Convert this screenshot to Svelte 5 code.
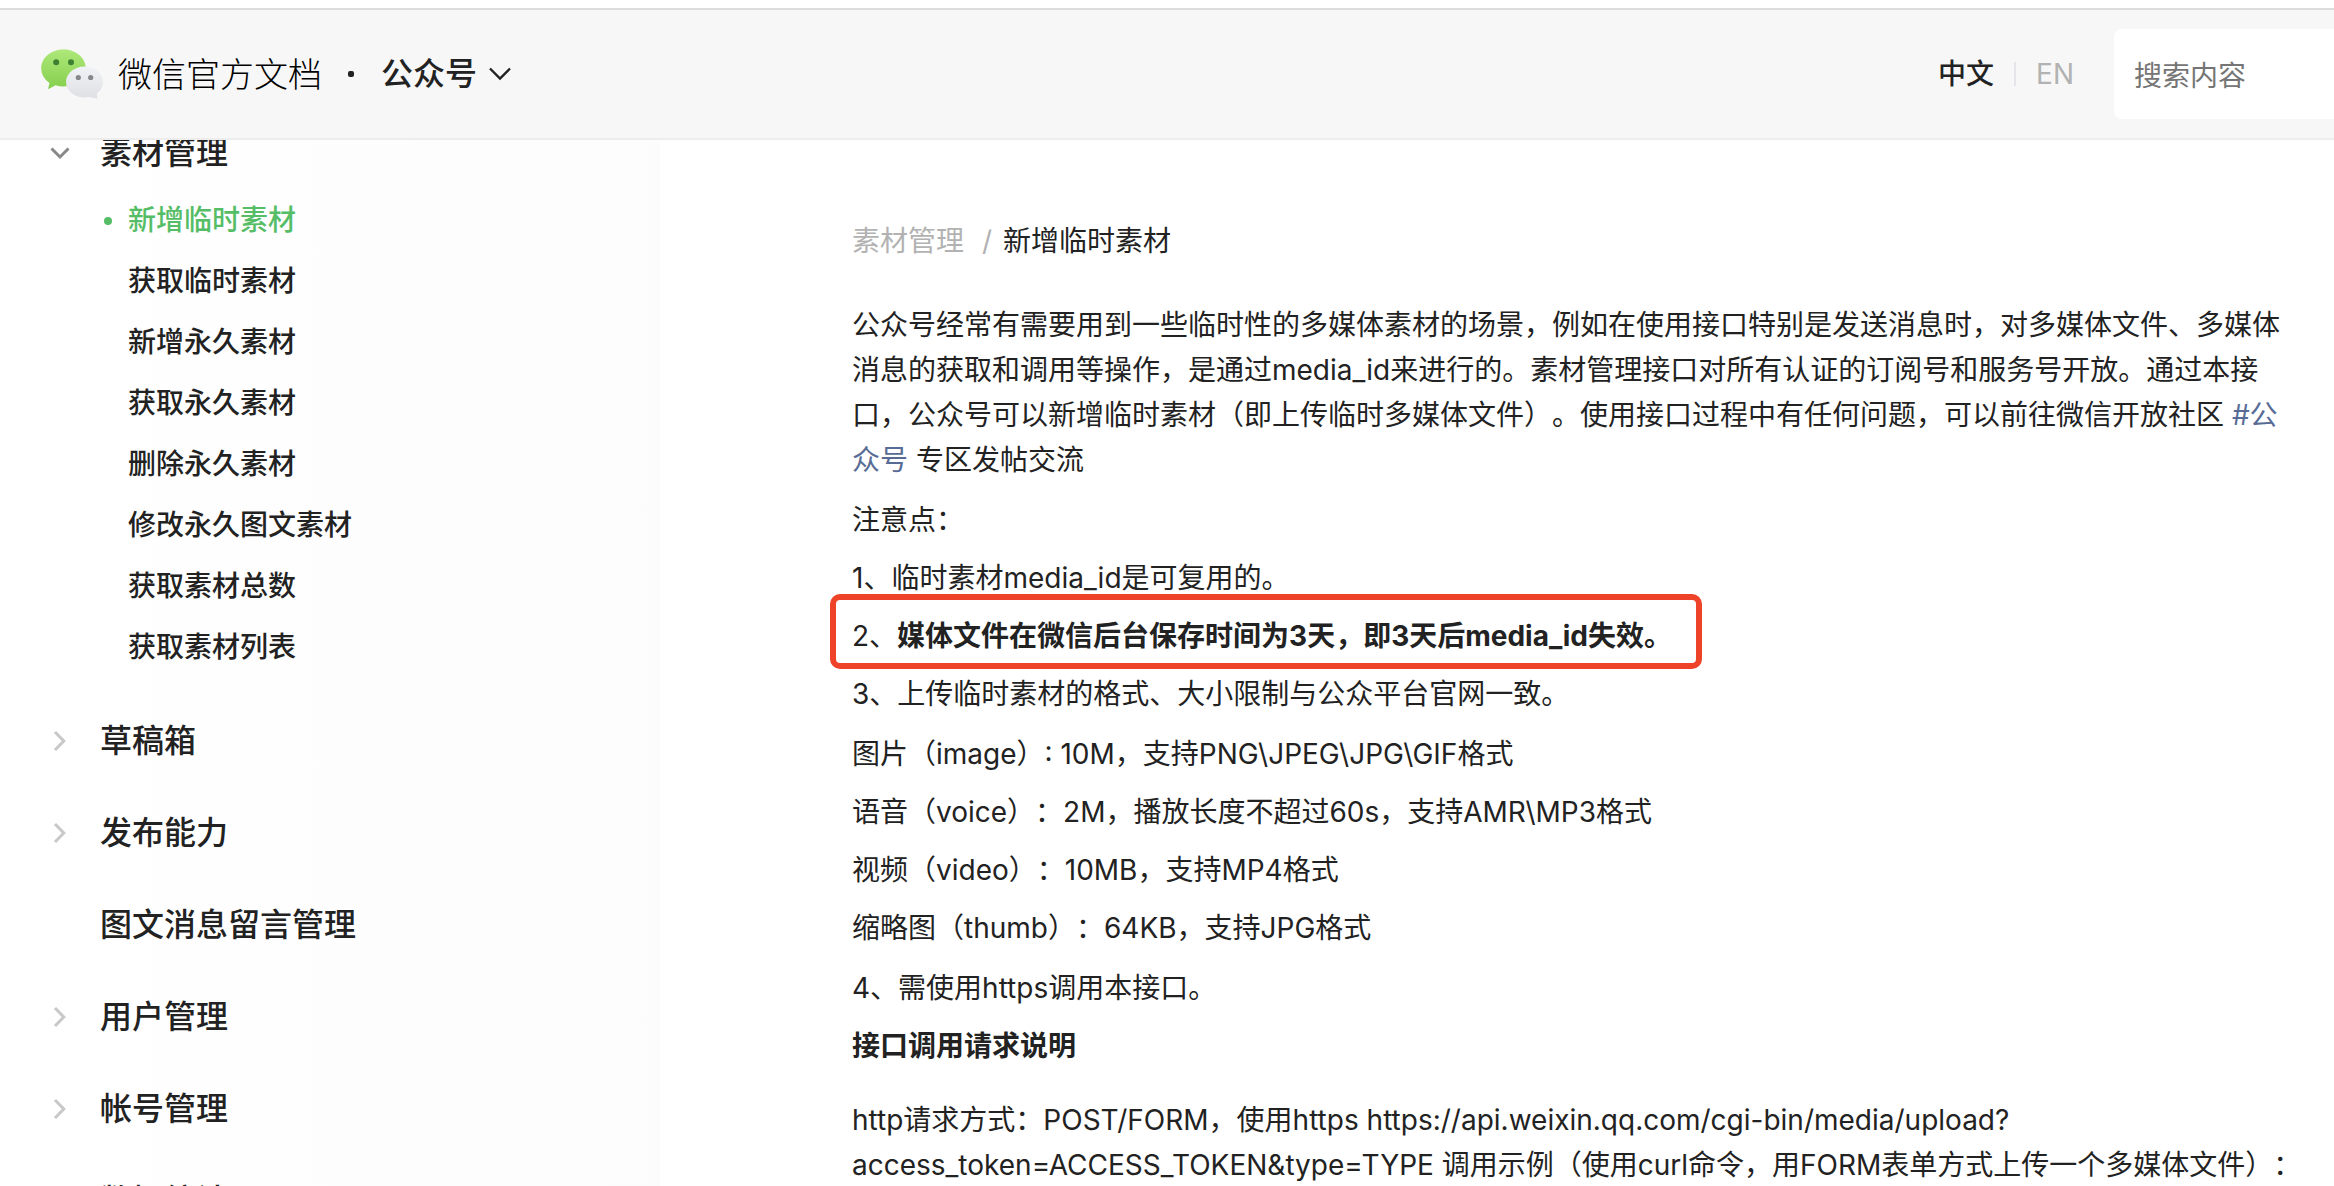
<script lang="ts">
  interface Section {
    title: string;
    leaf?: boolean;
    items?: string[];
  }

  const sections: Section[] = [
    {
      title: '素材管理',
      items: [
        '新增临时素材',
        '获取临时素材',
        '新增永久素材',
        '获取永久素材',
        '删除永久素材',
        '修改永久图文素材',
        '获取素材总数',
        '获取素材列表',
      ],
    },
    { title: '草稿箱' },
    { title: '发布能力' },
    { title: '图文消息留言管理', leaf: true },
    { title: '用户管理' },
    { title: '帐号管理' },
    { title: '数据统计' },
  ];

  const formats = [
    '图片（image）: 10M，支持PNG\\JPEG\\JPG\\GIF格式',
    '语音（voice）：2M，播放长度不超过60s，支持AMR\\MP3格式',
    '视频（video）：10MB，支持MP4格式',
    '缩略图（thumb）：64KB，支持JPG格式',
  ];

  let opened = $state('素材管理');
  let current = $state('新增临时素材');
  let keyword = $state('');

  function toggle(title: string) {
    opened = opened === title ? '' : title;
  }
</script>

<div class="page">
  <header class="header">
    <a class="brand" href="#home">
      <svg class="logo" width="62" height="50" viewBox="0 0 62 50">
        <defs>
          <linearGradient id="green" x1="0" y1="0" x2="0" y2="1">
            <stop offset="0" stop-color="#aee87a" />
            <stop offset="1" stop-color="#85cf4d" />
          </linearGradient>
          <linearGradient id="silver" x1="0" y1="0" x2="0" y2="1">
            <stop offset="0" stop-color="#f1f2f7" />
            <stop offset="1" stop-color="#e0e1e5" />
          </linearGradient>
        </defs>
        <path fill="url(#green)" d="M22.500 .5C10 .5 .200 8.700 .200 19.300c0 6 3.200 11.200 8.300 14.600L7 40.200l7.600-4c2.500.8 5.100 1.200 7.900 1.200 12.400 0 22.300-7.500 22.300-18.100S34.900.5 22.500.5z" />
        <ellipse fill="url(#silver)" cx="43.500" cy="33" rx="18.500" ry="15.500" />
        <path fill="#e1e2e6" d="M47 47.800l9.500 2-.9-6.500z" />
        <circle cx="15.200" cy="13.200" r="3" fill="#3d8031" />
        <circle cx="30" cy="13.200" r="3" fill="#3d8031" />
        <circle cx="37.300" cy="28.500" r="2.600" fill="#85878b" />
        <circle cx="49.700" cy="28.500" r="2.600" fill="#85878b" />
      </svg>
      <span class="brand-name">微信官方文档</span>
    </a>
    <span class="dot"></span>
    <button class="product">
      公众号
      <svg width="24" height="14" viewBox="0 0 24 14" fill="none"><path d="M2 1.500l10 10 10-10" stroke="#222" stroke-width="2.400" /></svg>
    </button>

    <div class="header-right">
      <a class="lang lang-active" href="#zh">中文</a>
      <span class="lang-line"></span>
      <a class="lang" href="#en">EN</a>
      <input class="search" type="text" placeholder="搜索内容" aria-label="搜索内容" bind:value={keyword} />
    </div>
  </header>

  <div class="body">
    <nav class="sidebar">
      {#each sections as section}
        <div class="section">
          <button class="section-head" onclick={() => toggle(section.title)}>
            <span class="arrow">
              {#if section.leaf}
                <!-- no children -->
              {:else if section.items && opened === section.title}
                <svg width="20" height="14" viewBox="0 0 20 14" fill="none"><path d="M1.500 2.500l8.500 8.500 8.500-8.500" stroke="#888" stroke-width="3" /></svg>
              {:else}
                <svg width="14" height="22" viewBox="0 0 14 22" fill="none"><path d="M2 2l8.800 9-8.800 9" stroke="#c8c8c8" stroke-width="3" /></svg>
              {/if}
            </span>
            {section.title}
          </button>
          {#if section.items && opened === section.title}
            <ul class="items">
              {#each section.items as item}
                <li>
                  <a class="item" class:active={item === current} href="#{item}" onclick={() => (current = item)}>{item}</a>
                </li>
              {/each}
            </ul>
          {/if}
        </div>
      {/each}
    </nav>

    <main class="content">
      <div class="crumbs">
        <a class="crumb" href="#material">素材管理</a>
        <span class="slash">/</span>
        <span>新增临时素材</span>
      </div>

      <p>公众号经常有需要用到一些临时性的多媒体素材的场景，例如在使用接口特别是发送消息时，对多媒体文件、多媒体消息的获取和调用等操作，是通过media_id来进行的。素材管理接口对所有认证的订阅号和服务号开放。通过本接口，公众号可以新增临时素材（即上传临时多媒体文件）。使用接口过程中有任何问题，可以前往微信开放社区 <a class="link" href="#community">#公众号</a> 专区发帖交流</p>

      <div class="group">
        <p>注意点：</p>
        <p>1、临时素材media_id是可复用的。</p>
        <p class="marked">2、<strong>媒体文件在微信后台保存时间为3天，即3天后media_id失效。</strong></p>
        <p>3、上传临时素材的格式、大小限制与公众平台官网一致。</p>
      </div>

      <div class="group">
        {#each formats as line}
          <p>{line}</p>
        {/each}
      </div>

      <div class="group">
        <p>4、需使用https调用本接口。</p>
        <p><strong>接口调用请求说明</strong></p>
      </div>

      <p class="request">http请求方式：POST/FORM，使用https https://api.weixin.qq.com/cgi-bin/media/upload?access_token=ACCESS_TOKEN&amp;type=TYPE 调用示例（使用curl命令，用FORM表单方式上传一个多媒体文件）：</p>
    </main>
  </div>
</div>

<style>
  :global(body) {
    overflow: hidden;
    background: #fff;
  }

  .page {
    display: flex;
    flex-direction: column;
    height: 100vh;
    box-sizing: border-box;
    padding-top: 8px;
    color: #222;
    font-family: Inter, "Noto Sans CJK SC", sans-serif;
    font-size: 28px;
    text-spacing-trim: space-all;
  }

  a { color: inherit; text-decoration: none; }
  button {
    padding: 0;
    border: 0;
    background: none;
    color: inherit;
    font: inherit;
    cursor: pointer;
  }
  p, ul { margin: 0; padding: 0; }
  ul { list-style: none; }

  .header {
    display: flex;
    align-items: center;
    flex-shrink: 0;
    height: 128px;
    padding-left: 41px;
    background: #f7f7f7;
    border-top: 2px solid #dcdcdc;
    border-bottom: 2px solid #ededed;
  }

  .brand { display: flex; align-items: center; gap: 15px; }
  .brand-name {
    padding-top: 2px;
    color: #000;
    font-size: 34px;
    font-weight: 300;
    line-height: 48px;
  }
  .dot {
    width: 6px;
    height: 6px;
    margin: 0 27px 0 26px;
    border-radius: 2px;
    background: #222;
  }
  .product {
    display: flex;
    align-items: center;
    gap: 11px;
    font-size: 32px;
    font-weight: 500;
    line-height: 48px;
  }

  .header-right {
    display: flex;
    align-items: center;
    margin-left: auto;
  }
  .lang { color: #b2b2b2; line-height: 40px; }
  .lang-active { color: #222; font-weight: 500; }
  .lang-line {
    width: 2px;
    height: 24px;
    margin: 0 20px;
    background: #e4e6ea;
  }
  .search {
    width: 220px;
    height: 90px;
    box-sizing: border-box;
    margin-left: 40px;
    padding: 4px 20px 0;
    border: 0;
    border-radius: 8px 0 0 8px;
    background: #fff;
    color: #222;
    font: inherit;
    outline: none;
  }
  .search::placeholder { color: #757575; }

  .body {
    display: flex;
    flex: 1;
    min-height: 0;
    overflow: hidden;
  }

  .sidebar {
    display: flex;
    flex-direction: column;
    flex-shrink: 0;
    gap: 50px;
    width: 660px;
    background: linear-gradient(to right, #fff, #fcfcfc);
  }
  .section-head {
    display: flex;
    align-items: center;
    margin-bottom: 16px;
    font-size: 32px;
    font-weight: 500;
    line-height: 26px;
  }
  .arrow {
    display: flex;
    justify-content: center;
    width: 20px;
    margin: 0 30px 0 50px;
  }
  .items { padding-top: 8px; }
  .item {
    display: flex;
    align-items: center;
    padding-left: 128px;
    font-weight: 500;
    line-height: 61px;
  }
  .item.active { padding-left: 104px; color: #56bd67; }
  .item.active::before {
    content: '';
    width: 8px;
    height: 8px;
    margin-right: 16px;
    border-radius: 50%;
    background: currentColor;
  }

  .content {
    flex: 1;
    min-width: 0;
    padding: 79px 50px 0 192px;
    line-height: 45px;
  }

  .crumbs { display: flex; margin-bottom: 39px; }
  .crumb { color: #b2b2b2; }
  .slash { margin: 0 11px 0 18px; color: #b2b2b2; }

  .link { color: #576b95; }
  strong { font-weight: 700; }

  .group {
    display: flex;
    flex-direction: column;
    align-items: flex-start;
    gap: 13px;
    margin-top: 15px;
  }

  .marked { position: relative; }
  .marked::after {
    content: '';
    position: absolute;
    inset: -20px -30px -10px -22px;
    border: 6px solid #ee4328;
    border-radius: 10px;
    pointer-events: none;
  }

  .request { margin: 29px -30px 0 0; }
</style>
